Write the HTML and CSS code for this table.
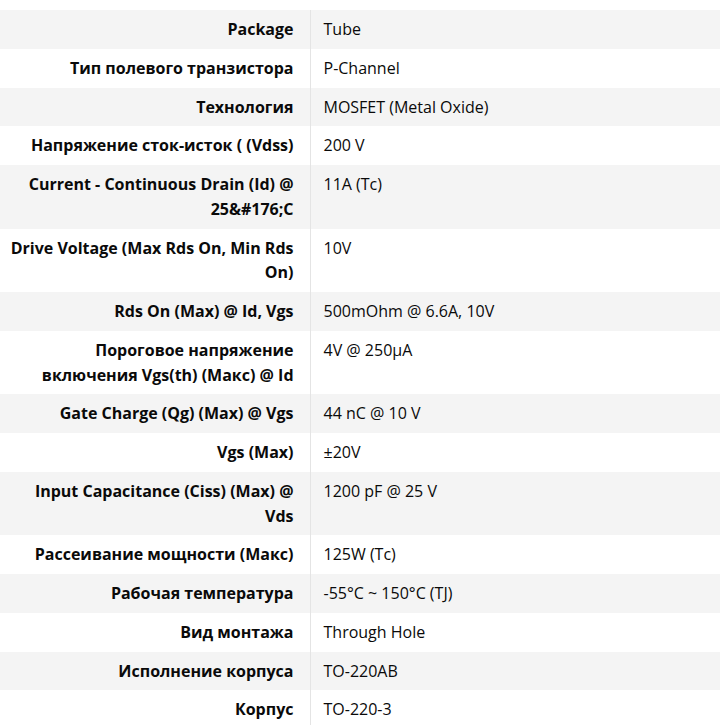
FILE: index.html
```html
<!DOCTYPE html>
<html lang="ru">
<head>
<meta charset="utf-8">
<link rel="stylesheet" href="styles.css">
</head>
<body>
<table class="specs">
<tbody>
<tr><th>Package</th><td>Tube</td></tr>
<tr><th>Тип полевого транзистора</th><td>P-Channel</td></tr>
<tr><th>Технология</th><td>MOSFET (Metal Oxide)</td></tr>
<tr><th>Напряжение сток-исток ( (Vdss)</th><td>200 V</td></tr>
<tr><th>Current - Continuous Drain (Id) @ 25&amp;#176;C</th><td>11A (Tc)</td></tr>
<tr><th>Drive Voltage (Max Rds On, Min Rds On)</th><td>10V</td></tr>
<tr><th>Rds On (Max) @ Id, Vgs</th><td>500mOhm @ 6.6A, 10V</td></tr>
<tr><th>Пороговое напряжение включения Vgs(th) (Макс) @ Id</th><td>4V @ 250µA</td></tr>
<tr><th>Gate Charge (Qg) (Max) @ Vgs</th><td>44 nC @ 10 V</td></tr>
<tr><th>Vgs (Max)</th><td>±20V</td></tr>
<tr><th>Input Capacitance (Ciss) (Max) @ Vds</th><td>1200 pF @ 25 V</td></tr>
<tr><th>Рассеивание мощности (Макс)</th><td>125W (Tc)</td></tr>
<tr><th>Рабочая температура</th><td>-55°C ~ 150°C (TJ)</td></tr>
<tr><th>Вид монтажа</th><td>Through Hole</td></tr>
<tr><th>Исполнение корпуса</th><td>TO-220AB</td></tr>
<tr><th>Корпус</th><td>TO-220-3</td></tr>
</tbody>
</table>
</body>
</html>
```
FILE: styles.css
```css
html, body {
  margin: 0;
  padding: 0;
  background: #fff;
}
body {
  padding-top: 10px;
  font-family: "Open Sans", "Noto Sans", sans-serif;
  font-size: 16px;
  color: #0a0a0a;
}
.specs {
  width: 720px;
  border-collapse: collapse;
  table-layout: fixed;
}
.specs tr:nth-child(odd) {
  background: #f4f4f4;
}
.specs th,
.specs td {
  vertical-align: top;
  line-height: 24.75px;
  padding-top: 7px;
  padding-bottom: 7px;
}
.specs th {
  width: 310px;
  box-sizing: border-box;
  text-align: right;
  font-weight: 700;
  padding-left: 8px;
  padding-right: 16px;
  border-right: 1px solid #e4e4e4;
}
.specs td {
  text-align: left;
  font-weight: 400;
  padding-left: 13px;
  padding-right: 10px;
}
```
